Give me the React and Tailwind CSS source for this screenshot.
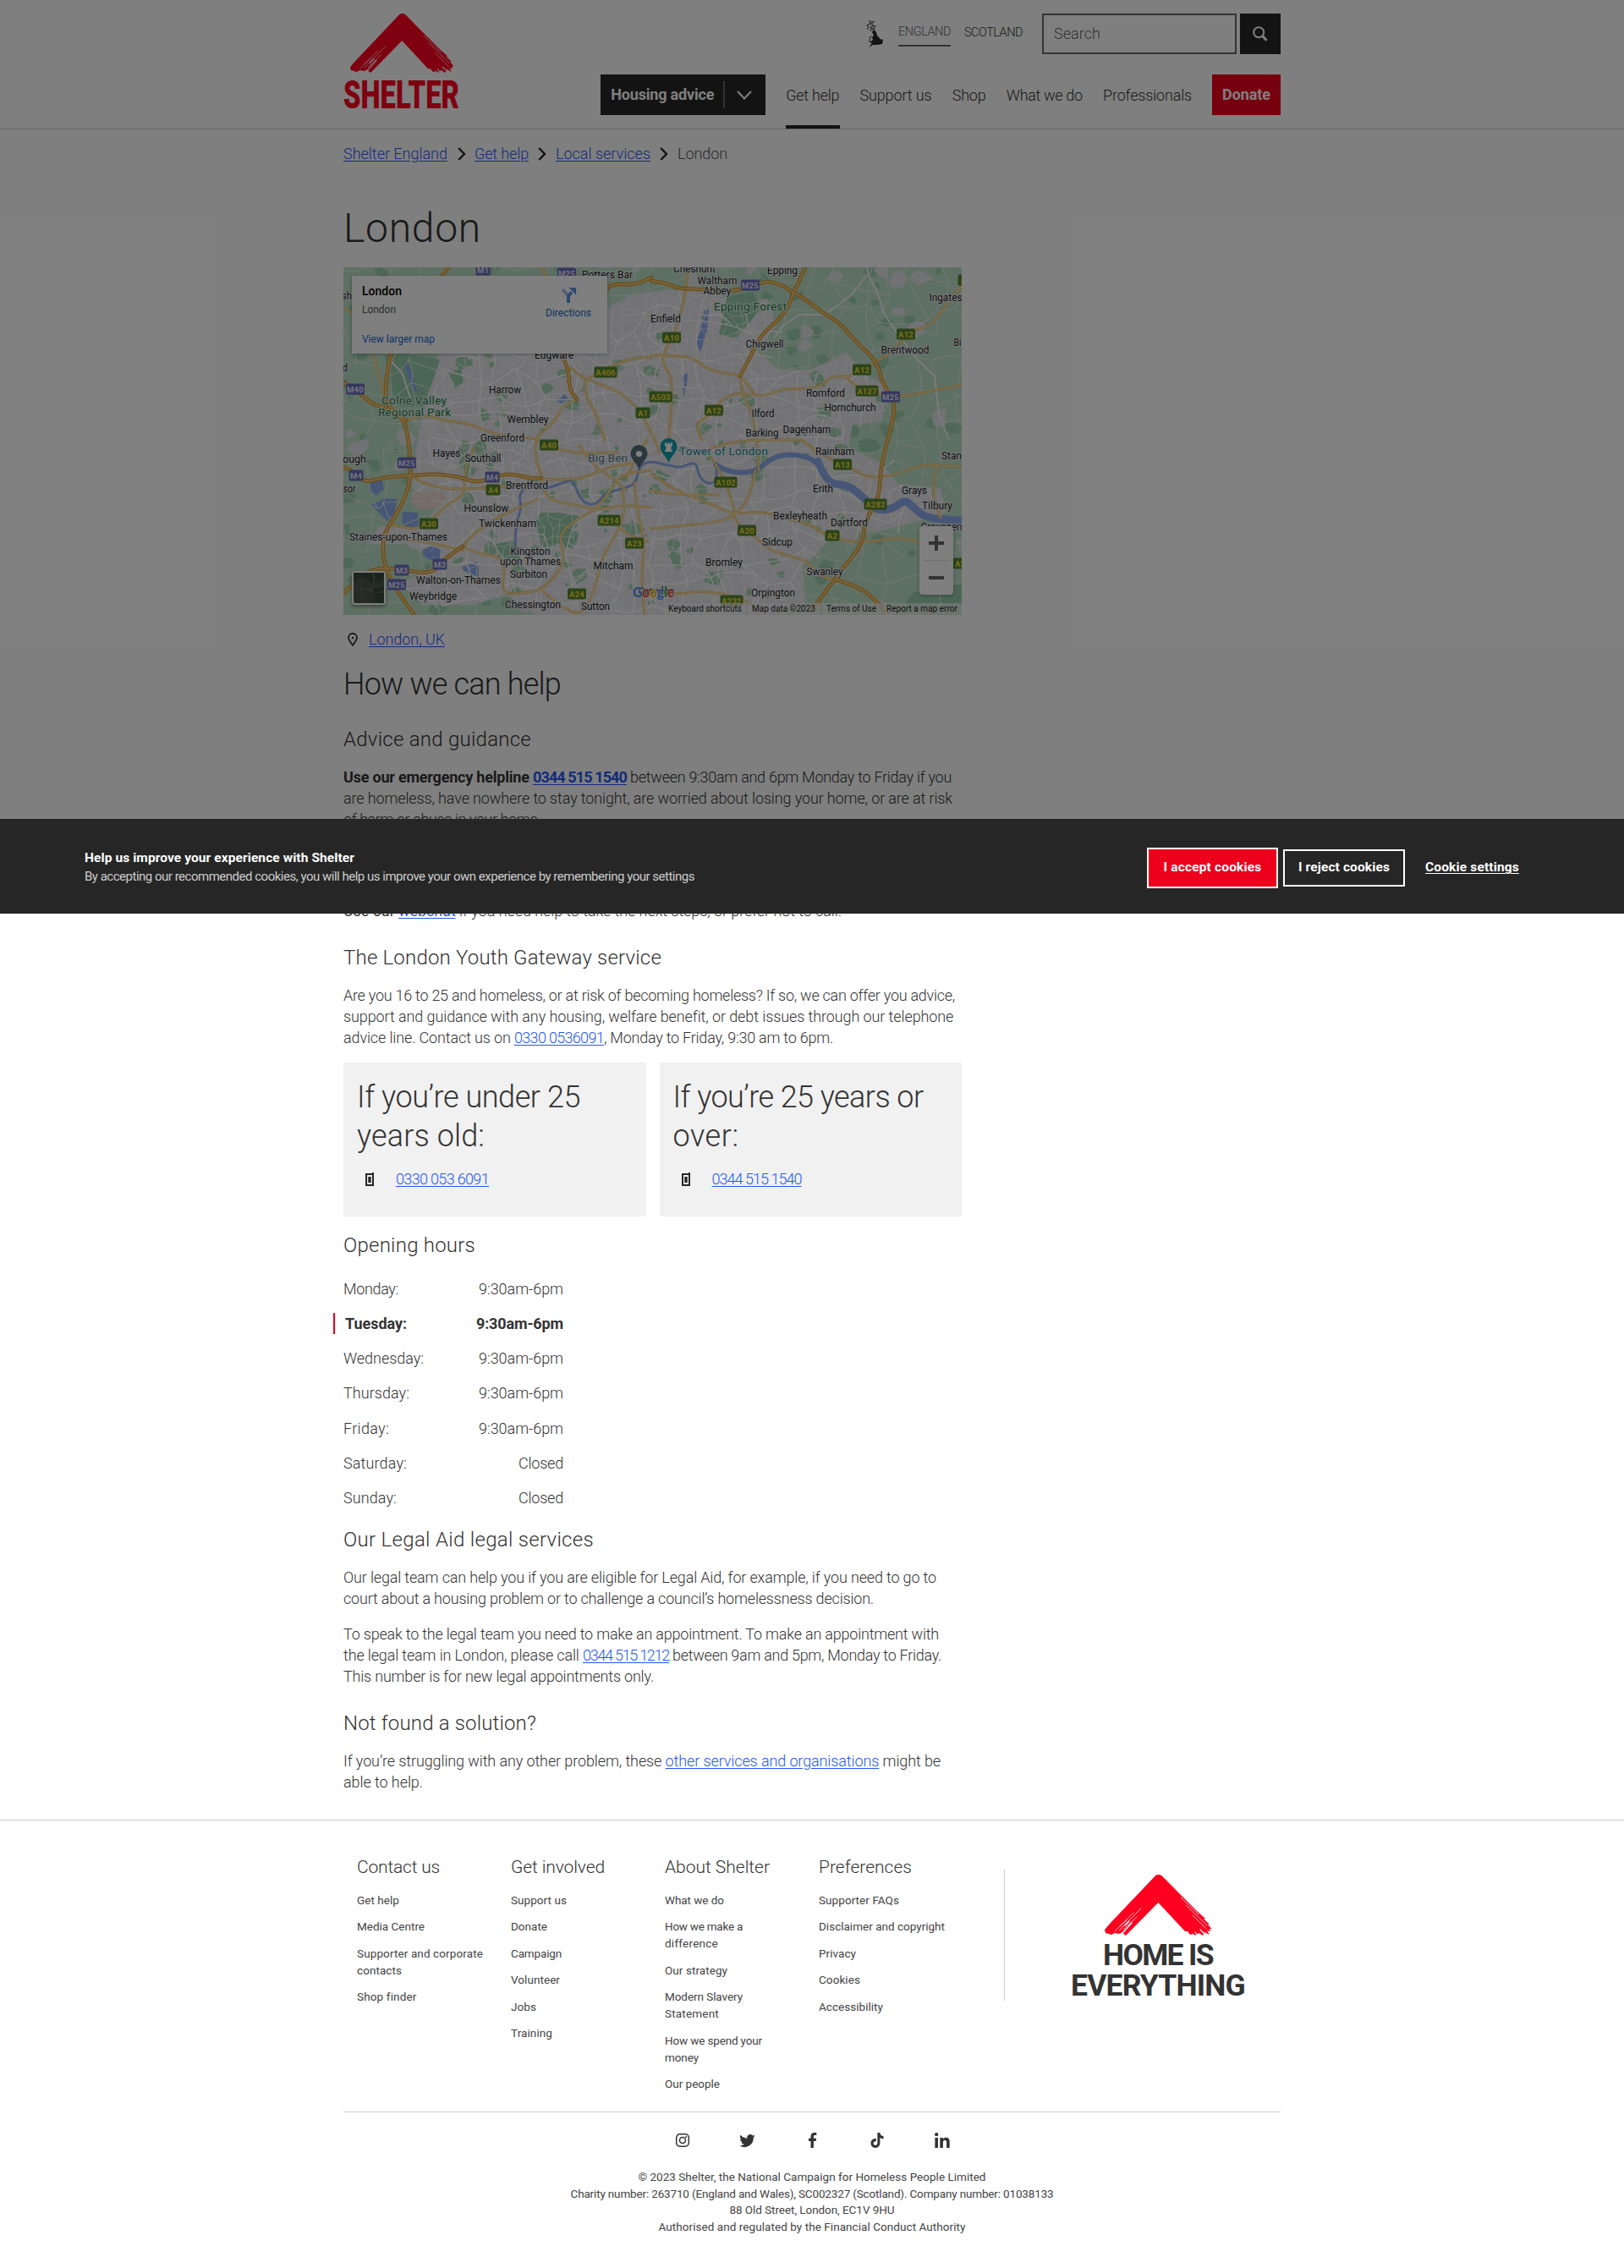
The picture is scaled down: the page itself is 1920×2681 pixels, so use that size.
import React, { useLayoutEffect, useRef } from "react";

/* Sets a single line of text to an exact measure by adjusting its tracking. */
function Fit({ w, className = "", children }) {
  const ref = useRef(null);
  useLayoutEffect(() => {
    const el = ref.current;
    el.style.letterSpacing = "0px";
    const natural = el.getBoundingClientRect().width;
    const n = el.textContent.length || 1;
    el.style.letterSpacing = `${(w - natural) / n}px`;
  }, [w]);
  return (
    <span ref={ref} className={"inline-block whitespace-pre " + className}>
      {children}
    </span>
  );
}

function A({ children, className = "" }) {
  return (
    <a href="#" className={"text-[#2457f5] underline underline-offset-2 " + className}>
      {children}
    </a>
  );
}

function RoofMark({ className }) {
  return (
    <svg viewBox="0 0 127 72" className={className} aria-hidden="true" preserveAspectRatio="none">
      <path
        fill="#ff0020"
        d="M60 1.2Q63.5-1.2 67.5 1.2L88 22 110 44 119 52 117 52 124 59 122 59 126.500 64 124 64 125 67 121 66 124 71 118 68 116 72 111 69 107 72 105 70 101 71 98 67 95 67 63.300 33 25 72 22 70 23 67 17 70 12 69 8 71 1 69 0 65 6 58Z"
      />
      <g stroke="#fff" fill="none" strokeLinecap="round">
        <path strokeWidth=".7" d="M34 45 12 67M43 40 17 66M38 50 22 65M26 54 17 62M90 27 111 47M96 36 121 60M104 48 120 64" />
        <path strokeWidth="1.3" d="M32 57 22 68M29 55 24 60M113 65 117 69M107 68 109 71" />
      </g>
    </svg>
  );
}

const Chevron = ({ className = "" }) => (
  <svg viewBox="0 0 10 16" className={"h-4 w-2.5 " + className} fill="none" stroke="#262626" strokeWidth="2.4">
    <path d="M1.200 1 8 8 1.200 15" />
  </svg>
);

/* ------------------------------- header ------------------------------- */

function Britain() {
  return (
    <svg viewBox="0 0 20 32" className="h-8 w-5">
      <path
        d="M8 2 4 1 5 4 1 6 3 8 1 11M10 1 6 4 8 6 5 9 8 11M8 6 11 7 8 9 10 11 9 12M6 10 5 13"
        fill="none"
        stroke="#555"
        strokeWidth="1.100"
      />
      <path d="M9 11 12 14 13 18 16 21 16 22 20 23 19 28 13 29 8 29 3 32 7 27 4 26 8 23 7 20 9 18 7 14Z" fill="#262626" />
      <path d="M7 19 4 20 5 22 3 25 6 26" fill="none" stroke="#555" />
    </svg>
  );
}

function Header() {
  const nav = [
    ["Get help", 63],
    ["Support us", 85],
    ["Shop", 40],
    ["What we do", 90],
    ["Professionals", 105],
  ];
  return (
    <header className="h-[153px] border-b border-[#ccc]">
      <div className="mx-auto flex w-[1108px] justify-between pt-4">
        <div className="flex w-[138px] flex-col items-center">
          <RoofMark className="h-[70px] w-[123px]" />
          <svg viewBox="0 0 138 35" className="mt-[8px] h-[35px] w-[138px]">
            <text
              x="0"
              y="34"
              fontFamily="Roboto, sans-serif"
              fontWeight="900"
              fontSize="46.500"
              fill="#ff0020"
              textLength="137"
              lengthAdjust="spacingAndGlyphs"
            >
              SHELTER
            </text>
          </svg>
        </div>
        <div className="flex flex-col items-end gap-6">
          <div className="flex h-12 items-center">
            <Britain />
            <span className="ml-[18px] mt-px border-b-2 border-[#666] text-[14.5px] leading-[17px] text-[#666]">
              <span className="block pb-[7px] pt-[3px]"><Fit w={62}>ENGLAND</Fit></span>
            </span>
            <span className="-mt-[2px] ml-[16px] text-[14.5px] leading-5"><Fit w={69}>SCOTLAND</Fit></span>
            <div className="ml-[23px] flex h-12 w-[230px] items-center border-2 border-[#666] pb-px pl-3 text-[18px] text-[#666]">
              <Fit w={55}>Search</Fit>
            </div>
            <button className="ml-1 flex h-12 w-12 items-center justify-center bg-[#262626]">
              <svg viewBox="0 0 18 18" className="h-[18px] w-[18px]" fill="none" stroke="#fff">
                <circle cx="7.200" cy="7.200" r="6" strokeWidth="2" />
                <path d="m11.500 11.500 5 5.200" strokeWidth="3" />
              </svg>
            </button>
          </div>
          <div className="flex h-12 items-center text-[18px]">
            <button className="flex h-12 w-[195px] items-center bg-[#262626] pl-3 font-bold text-white">
              <Fit w={122} className="-mt-px">Housing advice</Fit>
              <span className="ml-[11px] h-8 w-[2px] bg-[#666]" />
              <svg viewBox="0 0 18 11" className="ml-[14px] h-[11px] w-[18px]" fill="none" stroke="#fff" strokeWidth="2">
                <path d="m1 1 8 8.500 8-8.500" />
              </svg>
            </button>
            <nav className="flex gap-[24.200px] pl-6 pt-px">
              {nav.map(([label, w], i) => (
                <a key={label} href="#" className="relative">
                  <Fit w={w}>{label}</Fit>
                  {i === 0 && <span className="absolute -bottom-[26px] left-0 h-1 w-[64px] bg-[#262626]" />}
                </a>
              ))}
            </nav>
            <button className="ml-6 flex h-12 w-[81px] items-center justify-center bg-[#ed001c] pb-px font-bold text-white">
              <Fit w={57}>Donate</Fit>
            </button>
          </div>
        </div>
      </div>
    </header>
  );
}

/* --------------------------------- map -------------------------------- */

function seeded(seed) {
  let s = seed;
  return () => {
    s = (s * 1664525 + 1013904223) % 4294967296;
    return s / 4294967296;
  };
}

const CITY = [
  [520, 422], [580, 400], [640, 408], [700, 378], [745, 352], [790, 345], [850, 348], [862, 372], [905, 356], [915, 385],
  [890, 415], [920, 440], [960, 440], [1000, 420], [1020, 445], [1048, 460], [1040, 495], [1005, 500], [1000, 530],
  [1040, 550], [1060, 575], [1110, 580], [1115, 605], [1040, 625], [990, 625], [965, 650], [945, 670], [950, 712],
  [890, 727], [640, 727], [600, 700], [560, 712], [500, 712], [480, 690], [530, 665], [480, 640], [440, 640], [450, 625],
  [500, 625], [520, 600], [490, 575], [495, 530], [505, 480],
];

function inside(x, y) {
  let hit = false;
  for (let i = 0, j = CITY.length - 1; i < CITY.length; j = i++) {
    const [xi, yi] = CITY[i];
    const [xj, yj] = CITY[j];
    if (yi > y !== yj > y && x < ((xj - xi) * (y - yi)) / (yj - yi) + xi) hit = !hit;
  }
  return hit;
}

function mesh(step, seed, keep) {
  const r = seeded(seed);
  const cols = Math.ceil(760 / step) + 1;
  const rows = Math.ceil(430 / step) + 1;
  const pts = [];
  for (let j = 0; j < rows; j++) {
    pts.push([]);
    for (let i = 0; i < cols; i++) {
      pts[j].push([400 + (i + (r() - 0.5) * 0.95) * step, 310 + (j + (r() - 0.5) * 0.95) * step]);
    }
  }
  let d = "";
  for (let j = 0; j < rows; j++) {
    for (let i = 0; i < cols; i++) {
      const a = pts[j][i];
      [pts[j][i + 1], pts[j + 1] && pts[j + 1][i]].forEach((b) => {
        if (!b || r() < 0.16) return;
        const mx = (a[0] + b[0]) / 2;
        const my = (a[1] + b[1]) / 2;
        if (!keep(mx, my)) return;
        const qx = mx + (r() - 0.5) * step * 0.5;
        const qy = my + (r() - 0.5) * step * 0.5;
        d += `M${a[0].toFixed(1)} ${a[1].toFixed(1)}Q${qx.toFixed(1)} ${qy.toFixed(1)} ${b[0].toFixed(1)} ${b[1].toFixed(1)}`;
      });
    }
  }
  return d;
}

function blobs(count, seed, size, keep) {
  const r = seeded(seed);
  let d = "";
  for (let k = 0; k < count; k++) {
    const x = 406 + r() * 731;
    const y = 316 + r() * 411;
    const s = size * (0.35 + r());
    const pts = [];
    for (let a = 0; a < 7; a++) {
      const t = (a / 7) * Math.PI * 2;
      const q = s * (0.5 + r() * 0.8);
      pts.push(`${(x + Math.cos(t) * q).toFixed(1)} ${(y + Math.sin(t) * q * 0.85).toFixed(1)}`);
    }
    if (keep(x, y)) d += "M" + pts.join("L") + "Z";
  }
  return d;
}

const minorCity = mesh(12, 7, inside);
const midCity = mesh(27, 21, inside);
const rural = mesh(31, 5, (x, y) => !inside(x, y));
const parks = blobs(190, 11, 8, inside);
const woods = blobs(150, 19, 9, (x, y) => !inside(x, y));
const towns = blobs(60, 43, 11, (x, y) => !inside(x, y));

const smooth = (pts) => {
  let d = `M${pts[0]} ${pts[1]}`;
  for (let i = 2; i < pts.length - 2; i += 2) {
    d += `Q${pts[i]} ${pts[i + 1]} ${(pts[i] + pts[i + 2]) / 2} ${(pts[i + 1] + pts[i + 3]) / 2}`;
  }
  return d + `L${pts[pts.length - 2]} ${pts[pts.length - 1]}`;
};

const motorways = [
  [530, 316, 522, 328, 500, 350, 470, 400, 461, 420, 455, 460, 458, 480, 478, 496, 483, 520, 486, 560, 480, 587, 463, 617, 453, 633, 453, 667, 470, 700, 490, 727],
  [717, 342, 722, 335, 750, 337, 770, 328],
  [770, 332, 790, 335, 800, 341, 830, 342, 870, 345, 897, 334, 917, 333, 937, 345, 957, 357, 973, 370, 993, 382, 1010, 402, 1037, 427, 1043, 453, 1057, 473, 1057, 490, 1050, 518, 1041, 553, 1040, 587, 1022, 617, 1020, 643, 1000, 667, 987, 685, 973, 703, 960, 722],
  [987, 685, 1012, 692, 1033, 707, 1050, 727],
  [952, 316, 940, 342, 928, 372, 900, 395, 888, 420, 880, 435, 875, 445],
  [406, 552, 415, 555, 430, 571, 455, 564, 486, 562, 515, 560, 545, 564, 565, 571, 590, 562, 605, 560, 630, 566, 640, 565],
  [406, 702, 425, 682, 445, 671, 475, 673, 510, 679, 525, 661, 547, 646],
  [406, 452, 425, 464, 440, 478, 460, 483, 480, 497],
  [667, 425, 673, 440, 673, 460, 682, 472],
];

const aRoads = [
  [480, 497, 500, 490, 525, 497, 560, 502, 580, 512, 610, 517, 635, 518, 650, 528, 680, 536, 730, 535],
  [441, 420, 448, 445, 455, 470], [406, 363, 420, 370, 440, 400],
  [675, 435, 690, 448, 710, 454, 735, 465, 755, 484], [695, 448, 710, 437, 735, 428, 755, 422, 770, 423],
  [682, 472, 662, 482, 660, 492, 645, 508, 632, 519, 634, 545, 640, 562],
  [692, 450, 690, 463, 705, 490, 715, 520], [755, 484, 770, 510, 780, 535],
  [1137, 338, 1120, 358, 1103, 383, 1075, 393, 1055, 415, 1037, 427, 1003, 447, 985, 443, 967, 460, 925, 459, 905, 469, 870, 464, 853, 472, 835, 495, 822, 500, 830, 520],
  [1002, 447, 1013, 460, 1045, 467, 1077, 468, 1110, 460, 1137, 455],
  [770, 420, 783, 419, 822, 423, 835, 437, 870, 443, 878, 447, 893, 467], [875, 445, 877, 465, 888, 485, 895, 520, 897, 556],
  [813, 324, 810, 350, 803, 375, 797, 395, 784, 418, 784, 432, 795, 445, 793, 490, 790, 530],
  [840, 530, 865, 522, 900, 520, 947, 520], [947, 520, 975, 540, 1010, 555, 1025, 565, 1060, 561, 1085, 550, 1110, 550, 1137, 552],
  [770, 560, 790, 575, 813, 585, 850, 600, 868, 608, 900, 604, 935, 615, 955, 618, 975, 632, 1000, 640, 1035, 640, 1050, 636, 1080, 637, 1100, 650, 1137, 670],
  [770, 625, 800, 622, 850, 617, 870, 608, 885, 590, 893, 556], [868, 610, 875, 625, 890, 632, 910, 650, 935, 658, 955, 663, 970, 682, 987, 685],
  [840, 540, 850, 555, 860, 575, 868, 603], [770, 580, 790, 585, 850, 585],
  [750, 704, 770, 698, 800, 703, 830, 698, 870, 705, 890, 715, 900, 727],
  [634, 545, 640, 562, 645, 590, 680, 597, 707, 603, 735, 597, 770, 600],
  [640, 566, 670, 567, 690, 565, 720, 552, 745, 548], [486, 562, 500, 572, 530, 578, 560, 578, 600, 574],
  [547, 646, 565, 655, 590, 657, 597, 670, 593, 698, 605, 703, 623, 700, 640, 697, 660, 677, 668, 660, 660, 632, 680, 615, 705, 602, 725, 575, 735, 560, 770, 556],
  [547, 646, 560, 630, 590, 610, 620, 597, 635, 590], [463, 620, 490, 628, 510, 615, 530, 595, 550, 585, 548, 560, 560, 530],
  [453, 633, 500, 640, 547, 650], [640, 697, 665, 720, 690, 727, 705, 690, 712, 657, 730, 630, 740, 600, 735, 580],
  [723, 610, 735, 630, 765, 640], [750, 570, 752, 600, 763, 640, 758, 680, 762, 727], [1108, 550, 1100, 580, 1112, 612],
  [640, 316, 650, 335], [685, 527, 700, 550, 725, 565, 740, 580], [765, 520, 750, 545, 740, 565],
];

const river = smooth([
  610, 650, 608, 625, 617, 600, 613, 583, 630, 570, 640, 580, 667, 570, 677, 567, 684, 585, 692, 596, 706, 596, 715, 583, 735, 578,
  752, 572, 756, 550, 770, 545, 790, 550, 805, 553, 823, 545, 826, 563, 837, 573, 848, 568, 846, 549, 858, 558, 893, 559, 913, 540,
  940, 536, 967, 545, 977, 570, 1003, 573, 1023, 590, 1037, 604, 1057, 601, 1070, 589, 1083, 603, 1097, 613, 1137, 615,
]);
const estuary = smooth([846, 549, 858, 558, 893, 559, 913, 540, 940, 536, 967, 545, 977, 570, 1003, 573, 1023, 590, 1037, 604, 1057, 601, 1070, 589, 1083, 603, 1097, 613, 1137, 615]);
const lower = smooth([967, 545, 977, 572, 1003, 573, 1023, 590, 1037, 604, 1057, 601, 1070, 590, 1083, 603, 1097, 613, 1137, 615]);

/* label, centre x, centre y, rendered width */
const places = [
  ["Potters Bar", 718, 325, 60], ["Edgware", 655, 420, 46], ["Harrow", 597, 461, 38], ["Wembley", 624, 496, 49], ["Greenford", 594, 518, 52],
  ["Cheshunt", 821, 318, 50], ["Waltham", 848, 332, 47], ["Abbey", 848, 344, 33], ["Epping", 925, 320, 36], ["Enfield", 787, 377, 36],
  ["Chigwell", 904, 407, 45], ["Brentwood", 1070, 414, 57], ["Ingates", 1118, 352, 39], ["Bi", 1132, 405, 9], ["Romford", 976, 465, 46],
  ["Hornchurch", 1005, 482, 61], ["Ilford", 902, 489, 27], ["Barking", 901, 512, 39], ["Dagenham", 954, 508, 57],
  ["Hayes", 528, 536, 33], ["Southall", 571, 542, 43], ["ough", 419, 543, 28], ["sor", 413, 578, 15], ["sh", 410, 350, 12], ["d", 408, 435, 6],
  ["Brentford", 623, 574, 50], ["Hounslow", 575, 601, 53], ["Twickenham", 600, 619, 68], ["Staines-upon-Thames", 471, 635, 116],
  ["Kingston", 627, 652, 47], ["upon Thames", 627, 664, 72], ["Surbiton", 625, 679, 44], ["Walton-on-Thames", 542, 686, 100],
  ["Weybridge", 512, 705, 56], ["Chessington", 630, 715, 66], ["Sutton", 704, 717, 34], ["Mitcham", 725, 669, 47],
  ["Bromley", 856, 665, 44], ["Sidcup", 919, 641, 36], ["Bexleyheath", 946, 610, 64], ["Dartford", 1004, 618, 44], ["Erith", 973, 578, 24],
  ["Rainham", 987, 534, 46], ["Grays", 1081, 580, 30], ["Tilbury", 1108, 598, 36], ["Gravesen", 1113, 623, 49], ["Stan", 1125, 539, 24],
  ["Swanley", 975, 676, 43], ["Orpington", 914, 701, 52], ["Croydon", 776, 699, 43],
];

const shields = [
  ["M1", 571, 319, 1], ["M25", 670, 323, 1], ["M25", 887, 337, 1], ["M40", 420, 460, 1], ["A406", 716, 440], ["A1", 760, 488],
  ["A10", 794, 399], ["A503", 781, 469], ["A12", 844, 485], ["A12", 1071, 395], ["A12", 1019, 437], ["A127", 1025, 462], ["M25", 1053, 469, 1],
  ["M25", 481, 547, 1], ["M4", 421, 562, 1], ["M4", 582, 564, 1], ["A4", 583, 579], ["A40", 649, 526], ["A30", 507, 619], ["A214", 720, 615],
  ["A23", 750, 642], ["A24", 682, 702], ["M3", 475, 674, 1], ["M3", 520, 667, 1], ["M25", 469, 691, 1], ["A102", 858, 570], ["A13", 996, 549],
  ["A282", 1035, 596], ["A20", 883, 627], ["A2", 984, 633], ["A232", 865, 710], ["A2", 1135, 666], ["A", 1139, 331],
];

const shieldWidth = { 1: 12, 2: 16, 3: 21, 4: 26 };

function MapDrawing() {
  return (
    <svg viewBox="406 316 731 411" className="block h-[411px] w-[731px]" fontFamily="Roboto, sans-serif">
      <rect x="406" y="316" width="731" height="411" fill="#bce0c6" />
      <path d={woods} fill="#9fceaf" />
      <path d={towns} fill="#e2e4e8" />
      <path d={"M" + CITY.map((p) => p.join(" ")).join("L") + "Z"} fill="#e6e7eb" stroke="#e6e7eb" strokeWidth="6" strokeLinejoin="round" />
      <path d={parks} fill="#a4d2b2" />
      <g fill="#98cdab">
        <path d="M633 612 640 606 660 606 684 610 682 622 665 640 648 648 640 645Z" />
        <path d="M664 635 675 625 684 630 680 648 668 648ZM586 642 610 640 615 660 590 660Z" />
        <path d="M455 420 475 418 520 425 512 450 500 480 470 480 460 450Z" />
        <path d="M530 440 545 436 548 452 538 458ZM860 350 890 345 900 365 870 400 850 395ZM1080 700 1137 690V727H1060Z" />
      </g>
      <path d="M487 583 520 580 528 588 518 600 500 603 488 598Z" fill="#ecd6cc" />
      <g fill="#8fadec">
        <path d="M437 570 452 567 454 578 445 586 437 580ZM438 597 455 589 470 590 466 608 458 616 448 606ZM476 605 494 606 495 622 482 625 475 618Z" />
        <path d="M500 650 510 645 522 650 520 660 508 662 500 656ZM833 366 838 366 836 390 828 416 823 405 828 390ZM477 430 484 432 492 460 498 464 488 462ZM658 473 668 466 672 472 662 478Z" />
        <path d="M545 670 565 664 566 682 550 676ZM806 445 813 440 812 455 808 470Z" />
      </g>
      <g fill="none" strokeLinecap="round" strokeLinejoin="round">
        <path d={rural} stroke="#e6edea" strokeWidth="1" />
        <path d={minorCity} stroke="#fafafa" strokeWidth=".7" />
        <path d={midCity} stroke="#fff" strokeWidth="1.400" />
        <path d="M1025 316 1027 325 1037 345 1045 370 1060 393 1085 425 1105 445 1110 490 1122 520M1025 325 1005 350 975 372 945 372 925 385 915 400M460 425 475 440 485 470" stroke="#f4f4f4" strokeWidth="2" />
        <path d={river} stroke="#8fadec" strokeWidth="3" />
        <path d={estuary} stroke="#8fadec" strokeWidth="6" />
        <path d={lower} stroke="#8fadec" strokeWidth="9" />
        {aRoads.map((p, i) => <path key={"c" + i} d={smooth(p)} stroke="#e6bd6a" strokeWidth="3" />)}
        {aRoads.map((p, i) => <path key={"f" + i} d={smooth(p)} stroke="#f8dfa4" strokeWidth="1.500" />)}
        {motorways.map((p, i) => <path key={"m" + i} d={smooth(p)} stroke="#d99a34" strokeWidth="4.600" />)}
        {motorways.map((p, i) => <path key={"n" + i} d={smooth(p)} stroke="#f3ca78" strokeWidth="2" />)}
      </g>
      {shields.map(([t, x, y, m], i) => {
        const w = shieldWidth[t.length];
        return (
          <g key={i}>
            <rect x={x - w / 2 - 0.5} y={y - 6.5} width={w + 1} height="13" rx="2" fill={m ? "#6a6fbe" : "#568631"} />
            <text x={x} y={y + 3.6} textAnchor="middle" fontSize="9.500" fontWeight="700" letterSpacing=".2" fill={m ? "#e8e8f4" : "#f0dc3c"}>{t}</text>
          </g>
        );
      })}
      <g fontSize="12" fill="#202124" stroke="#f1f3f4" strokeWidth="2" strokeLinejoin="round" paintOrder="stroke" textAnchor="middle">
        {places.map(([t, x, y, w]) => (
          <text key={t} x={x} y={y + 4.2} textLength={w} lengthAdjust="spacingAndGlyphs">{t}</text>
        ))}
      </g>
      <g fontSize="13.500" stroke="#e4f3e8" strokeWidth="2" paintOrder="stroke" fill="#237a48">
        <text x="451" y="478" textLength="77">Colne Valley</text>
        <text x="447" y="492" textLength="86">Regional Park</text>
        <text x="844" y="367" textLength="86">Epping Forest</text>
      </g>
      <g fontSize="13.500" stroke="#f1f3f4" strokeWidth="2" paintOrder="stroke">
        <text x="695" y="546" textLength="47" fill="#56788a">Big Ben</text>
        <text x="803" y="538" textLength="105" fill="#17899a">Tower of London</text>
      </g>
      <path d="M755.500 555C753 547 745.500 543 745.500 536A10 10 0 0 1 765.500 536C765.500 543 758 547 755.500 555Z" fill="#546e7a" />
      <circle cx="755.500" cy="536.500" r="3.600" fill="#fff" />
      <path d="M790.500 547C788 539 780.500 535 780.500 528A10 10 0 0 1 800.500 528C800.500 535 793 539 790.500 547Z" fill="#129eaf" />
      <path d="M786 523h2v2h1.500v-2h2v2h1.500v-2h2v4l-1.500 1v3l1.500 2v1h-9v-1l1.500-2v-3l-1.500-1Z" fill="#fff" />
      <g fontFamily="Lato, sans-serif" fontSize="17" fontWeight="700" stroke="#fff" strokeWidth="1" paintOrder="stroke">
        <text x="748" y="706" textLength="49" lengthAdjust="spacingAndGlyphs">
          <tspan fill="#4285f4">G</tspan><tspan fill="#ea4335">o</tspan><tspan fill="#fbbc04">o</tspan><tspan fill="#4285f4">g</tspan><tspan fill="#34a853">l</tspan><tspan fill="#ea4335">e</tspan>
        </text>
      </g>
    </svg>
  );
}

function MapPanel() {
  return (
    <div className="relative mt-[18px] h-[411px] w-[731px] overflow-hidden font-['Roboto',sans-serif] font-normal">
      <MapDrawing />
      <div className="absolute left-[10px] top-[10px] flex h-[92px] w-[302px] justify-between bg-white pl-3 pr-[19px] shadow-[0_1px_4px_rgba(0,0,0,0.3)]">
        <div className="flex flex-col pt-[9px]">
          <p className="text-[14px] font-medium leading-[18px] text-black"><Fit w={47}>London</Fit></p>
          <p className="mt-[4px] text-[12px] leading-[18px] text-[#5b5b5b]"><Fit w={40}>London</Fit></p>
          <a href="#" className="mt-[17px] text-[12px] leading-[18px] text-[#1a66c8]"><Fit w={86}>View larger map</Fit></a>
        </div>
        <a href="#" className="flex flex-col items-center pt-[14px] text-[12px] leading-[18px] text-[#1a66c8]">
          <svg viewBox="0 0 18 18" className="h-[18px] w-[18px]">
            <path d="M2 2 9 9.500V11" stroke="#9dbcea" strokeWidth="3.500" fill="none" />
            <path d="M9 18V11Q9 9 13 5.500" stroke="#5b93e4" strokeWidth="4" fill="none" />
            <path d="M9.500 0H18V8.500Z" fill="#5b93e4" />
          </svg>
          <Fit w={54} className="mt-[3px]">Directions</Fit>
        </a>
      </div>
      <div className="absolute bottom-[12px] left-[10px] h-10 w-10 rounded-sm border-2 border-white bg-[#4a544c] shadow-[0_2px_4px_rgba(0,0,0,0.4)]">
        <svg viewBox="0 0 36 36" className="h-9 w-9" fill="none">
          <path d="M0 9 12 5 20 12 36 8V0H0ZM22 20 36 16V36H25Z" fill="#34483a" />
          <path d="M3 3 10 14 8 26 15 34M23 0 25 12 21 20 27 30M0 22 14 19 25 24 36 22" stroke="#666a60" strokeWidth=".8" />
          <path d="m23 2 2 7M14 19l9 2" stroke="#8a8f88" strokeWidth=".7" />
        </svg>
      </div>
      <div className="absolute right-[10px] top-[306px] flex h-[81px] w-10 flex-col items-center rounded-sm bg-white shadow-[0_1px_4px_rgba(0,0,0,0.3)]">
        <svg viewBox="0 0 40 81" className="h-[81px] w-10" stroke="#666" strokeWidth="4" fill="none">
          <path d="M11 20H29M20 11V29M11 61H29" />
          <path d="M5 40.500H35" stroke="#e0e0e0" strokeWidth="1" />
        </svg>
      </div>
      <div className="absolute bottom-0 right-0 flex h-[14px] items-center bg-[#f5f5f5]/70 text-[10px] leading-[14px] text-[#222]">
        <span className="px-[5px]"><Fit w={87}>Keyboard shortcuts</Fit></span>
        <span className="border-l border-black/10 px-[6px]"><Fit w={75}>Map data ©2023</Fit></span>
        <span className="border-l border-black/10 px-[6px]"><Fit w={59}>Terms of Use</Fit></span>
        <span className="border-l border-black/10 px-[5px]"><Fit w={84}>Report a map error</Fit></span>
      </div>
    </div>
  );
}

/* ------------------------------- content ------------------------------ */

const H3 = ({ w, className, children }) => (
  <h3 className={"text-[24px] leading-[30px] " + className}><Fit w={w}>{children}</Fit></h3>
);

const Line = ({ w, children }) => <span className="block"><Fit w={w}>{children}</Fit></span>;

const FitLink = ({ w, className = "", children }) => (
  <a href="#" className={"text-[#2457f5] " + className}><Fit w={w} className="underline underline-offset-2">{children}</Fit></a>
);

function PhoneCard({ title, phone, pw }) {
  return (
    <div className="h-[182px] bg-[#f1f1f1] px-4 pt-[18px]">
      <h2 className="text-[36px] leading-[46px]">
        {title.map(([t, w]) => <Line key={t} w={w}>{t}</Line>)}
      </h2>
      <div className="mt-[15px] flex h-[25px] items-center pl-[10px]">
        <svg viewBox="0 0 10 16" className="h-4 w-2.5">
          <path d="M8 0h2v16H0V1h8ZM2 3v11h6V3Z" fill="#262626" fillRule="evenodd" />
          <rect x="3.300" y="5" width="3.400" height="7" fill="#262626" />
        </svg>
        <span className="ml-[26px]"><FitLink w={pw}>{phone}</FitLink></span>
      </div>
    </div>
  );
}

function Hours() {
  const rows = [
    ["Monday:", 65, "9:30am-6pm", 100],
    ["Tuesday:", 73, "9:30am-6pm", 103],
    ["Wednesday:", 95, "9:30am-6pm", 100],
    ["Thursday:", 78, "9:30am-6pm", 100],
    ["Friday:", 54, "9:30am-6pm", 100],
    ["Saturday:", 75, "Closed", 53],
    ["Sunday:", 63, "Closed", 53],
  ];
  return (
    <dl className="mt-[16px] flex h-[288px] w-[260px] flex-col">
      {rows.map(([d, dw, t, tw], i) => (
        <div key={d} className="flex flex-1 items-center">
          <div className={i === 1 ? "-ml-3 flex w-[272px] justify-between border-l-2 border-[#ed001c] pl-[12px] font-bold" : "flex w-full justify-between"}>
            <dt><Fit w={dw}>{d}</Fit></dt>
            <dd><Fit w={tw}>{t}</Fit></dd>
          </div>
        </div>
      ))}
    </dl>
  );
}

function Main() {
  return (
    <main className="mx-auto w-[1108px] leading-[25px]">
      <nav className="flex h-[41px] items-center pt-[16px]">
        <FitLink w={123}>Shelter England</FitLink>
        <Chevron className="ml-[12px] mr-[10px]" />
        <FitLink w={64}>Get help</FitLink>
        <Chevron className="ml-[11px] mr-[11px]" />
        <FitLink w={112}>Local services</FitLink>
        <Chevron className="ml-[11px] mr-[11px]" />
        <Fit w={59} className="text-[#555]">London</Fit>
      </nav>
      <div className="w-[735px]">
        <h1 className="mt-[48px] text-[48px] leading-[56px]"><Fit w={163}>London</Fit></h1>
        <MapPanel />
        <p className="mt-4 flex h-[25px] items-center pl-[5px]">
          <svg viewBox="0 0 12 16" className="h-4 w-3" fill="none" stroke="#262626" strokeWidth="1.700">
            <path d="M6 14.800C4.500 12 1 9 1 5.800A5 5 0 0 1 11 5.800C11 9 7.500 12 6 14.800Z" />
            <circle cx="6" cy="6" r="1.200" fill="#262626" stroke="none" />
          </svg>
          <span className="ml-[13px]"><FitLink w={90}>London, UK</FitLink></span>
        </p>
        <h2 className="mt-[18px] text-[36px] leading-[46px]"><Fit w={257}>How we can help</Fit></h2>
        <H3 w={222} className="mt-[27px]">Advice and guidance</H3>
        <p className="mt-[17px]">
          <span className="block">
            <Fit w={224} className="font-bold">{"Use our emergency helpline "}</Fit>
            <FitLink w={111} className="font-bold">0344 515 1540</FitLink>
            <Fit w={384}>{" between 9:30am and 6pm Monday to Friday if you"}</Fit>
          </span>
          <Line w={720}>are homeless, have nowhere to stay tonight, are worried about losing your home, or are at risk</Line>
          <Line w={233}>of harm or abuse in your home.</Line>
        </p>
        <p className="mt-[83px]">
          <Line w={589}><b>Use our <A>webchat</A></b> if you need help to take the next steps, or prefer not to call.</Line>
        </p>
        <H3 w={376} className="mt-[28px]">The London Youth Gateway service</H3>
        <p className="mt-[17px]">
          <Line w={723}>Are you 16 to 25 and homeless, or at risk of becoming homeless? If so, we can offer you advice,</Line>
          <Line w={721}>support and guidance with any housing, welfare benefit, or debt issues through our telephone</Line>
          <span className="block">
            <Fit w={202}>{"advice line. Contact us on "}</Fit>
            <FitLink w={106}>0330 0536091</FitLink>
            <Fit w={271}>, Monday to Friday, 9:30 am to 6pm.</Fit>
          </span>
        </p>
        <div className="mt-[17px] grid w-[731px] grid-cols-2 gap-4">
          <PhoneCard title={[["If you’re under 25", 264], ["years old:", 151]]} phone="0330 053 6091" pw={110} />
          <PhoneCard title={[["If you’re 25 years or", 296], ["over:", 78]]} phone="0344 515 1540" pw={106} />
        </div>
        <H3 w={156} className="mt-[19px]">Opening hours</H3>
        <Hours />
        <H3 w={296} className="mt-[14px]">Our Legal Aid legal services</H3>
        <p className="mt-[17px]">
          <Line w={701}>Our legal team can help you if you are eligible for Legal Aid, for example, if you need to go to</Line>
          <Line w={627}>court about a housing problem or to challenge a council’s homelessness decision.</Line>
        </p>
        <p className="mt-[17px]">
          <Line w={704}>To speak to the legal team you need to make an appointment. To make an appointment with</Line>
          <span className="block">
            <Fit w={283}>{"the legal team in London, please call "}</Fit>
            <FitLink w={102}>0344 515 1212</FitLink>
            <Fit w={322}>{" between 9am and 5pm, Monday to Friday."}</Fit>
          </span>
          <Line w={367}>This number is for new legal appointments only.</Line>
        </p>
        <H3 w={228} className="mt-[28px]">Not found a solution?</H3>
        <p className="mt-[17px]">
          <Line w={706}>If you’re struggling with any other problem, these <A>other services and organisations</A> might be</Line>
          <Line w={94}>able to help.</Line>
        </p>
      </div>
    </main>
  );
}

/* -------------------------------- footer ------------------------------ */

const columns = [
  ["Contact us", 98, [[["Get help", 50]], [["Media Centre", 80]], [["Supporter and corporate", 149], ["contacts", 53]], [["Shop finder", 70]]]],
  ["Get involved", 111, [[["Support us", 66]], [["Donate", 43]], [["Campaign", 60]], [["Volunteer", 58]], [["Jobs", 30]], [["Training", 49]]]],
  ["About Shelter", 124, [[["What we do", 70]], [["How we make a", 92], ["difference", 63]], [["Our strategy", 74]], [["Modern Slavery", 92], ["Statement", 64]], [["How we spend your", 115], ["money", 40]], [["Our people", 65]]]],
  ["Preferences", 110, [[["Supporter FAQs", 95]], [["Disclaimer and copyright", 149]], [["Privacy", 44]], [["Cookies", 49]], [["Accessibility", 76]]]],
];

function Social() {
  return (
    <div className="flex h-[18px] items-center justify-center gap-[58.5px]">
      <svg viewBox="0 0 18 18" className="h-[18px] w-[18px]" fill="none" stroke="#333" strokeWidth="1.500">
        <rect x="1.700" y="1.700" width="14.600" height="14.600" rx="4.200" />
        <circle cx="9" cy="9" r="3.500" />
        <circle cx="13.100" cy="4.900" r="1" fill="#333" stroke="none" />
      </svg>
      <svg viewBox="0 0 24 24" className="h-[19px] w-[19px]" fill="#333">
        <path d="M23.600 5c-.85.400-1.750.650-2.700.750a4.700 4.700 0 0 0 2-2.600c-.9.550-1.900.950-3 1.150a4.700 4.700 0 0 0-8.100 4.300A13.400 13.400 0 0 1 2 3.600a4.700 4.700 0 0 0 1.500 6.300c-.8 0-1.500-.2-2.100-.6v.1a4.700 4.700 0 0 0 3.800 4.600c-.7.200-1.400.2-2.100.1a4.700 4.700 0 0 0 4.400 3.300A9.500 9.500 0 0 1 .5 19.300 13.400 13.400 0 0 0 21.200 7.400c.95-.65 1.750-1.500 2.400-2.400Z" />
      </svg>
      <svg viewBox="0 0 18 18" className="h-[18px] w-[18px]" fill="#333">
        <path d="M6.500 18V10H4V6.700H6.500V4.500C6.500 1.600 8.200 0 10.800 0c1.200 0 2.300.1 2.500.1v3h-1.700c-1.400 0-1.700.7-1.700 1.600v2h3.200L12.700 10H9.900v8Z" />
      </svg>
      <svg viewBox="0 0 24 24" className="h-[18px] w-[18px]" fill="#333">
        <path d="M12.500 0h4c.1 3 2.200 5.400 5.500 5.700v4.100c-2 0-4-.6-5.500-1.700v8.200c0 4.500-3.400 7.700-7.400 7.700C5 24 2 20.600 2 16.700c0-4.500 3.900-7.900 8.400-7.200v4.200c-2.300-.7-4.300.8-4.300 2.900 0 1.700 1.300 3.200 3.100 3.200 2 0 3.300-1.400 3.300-3.600Z" />
      </svg>
      <svg viewBox="0 0 18 18" className="h-[18px] w-[18px]" fill="#333">
        <path d="M.4 6H4v12H.4ZM6.300 6h3.500v1.600C10.500 6.500 11.700 5.700 13.300 5.700c3.500 0 4.400 2.200 4.400 5.400V18h-3.600v-6.200c0-1.500-.2-2.900-2-2.900-1.900 0-2.200 1.500-2.200 2.900V18H6.300Z" />
        <circle cx="2.200" cy="2.200" r="2.100" />
      </svg>
    </div>
  );
}

function Footer() {
  return (
    <footer className="mt-[32px] border-t border-[#ccc]">
      <div className="mx-auto w-[1108px]">
        <div className="flex h-[345px] border-b border-[#ccc] pl-4 pt-[41px]">
          {columns.map(([title, w, items]) => (
            <section key={title} className="w-[182px]">
              <h4 className="text-[21px] leading-7"><Fit w={w}>{title}</Fit></h4>
              <ul className="mt-[14.5px] flex flex-col gap-[11.5px] text-[13.5px] font-normal leading-5 text-[#444]">
                {items.map((lines) => (
                  <li key={lines[0][0]}>
                    {lines.map(([t, lw]) => <Line key={t} w={lw}>{t}</Line>)}
                  </li>
                ))}
              </ul>
            </section>
          ))}
          <div className="ml-[37px] mt-[17px] flex h-[155px] flex-1 flex-col items-center border-l border-[#ccc] pl-[36px] pt-[6px]">
            <RoofMark className="h-[72px] w-[127px]" />
            <p className="mt-[5px] text-center text-[35.5px] font-bold leading-9">
              <Line w={130}>HOME IS</Line>
              <Line w={206}>EVERYTHING</Line>
            </p>
          </div>
        </div>
        <div className="pt-[24px]"><Social /></div>
        <div className="mt-[25px] h-[117px] text-center text-[13.5px] font-normal leading-[19.6px] text-[#444]">
          <Line w={411}>© 2023 Shelter, the National Campaign for Homeless People Limited</Line>
          <Line w={571}>Charity number: 263710 (England and Wales), SC002327 (Scotland). Company number: 01038133</Line>
          <Line w={195}>88 Old Street, London, EC1V 9HU</Line>
          <Line w={363}>Authorised and regulated by the Financial Conduct Authority</Line>
        </div>
      </div>
    </footer>
  );
}

function CookieBanner() {
  return (
    <div className="absolute inset-x-0 top-[968px] flex h-[112px] items-center justify-between bg-[#262626] pl-[100px] pr-[124px] text-[15.500px] text-white">
      <div className="pt-px leading-[22px]">
        <p className="font-bold"><Fit w={319}>Help us improve your experience with Shelter</Fit></p>
        <p className="text-[15px] font-normal text-[#ccc]"><Fit w={721}>By accepting our recommended cookies, you will help us improve your own experience by remembering your settings</Fit></p>
      </div>
      <div className="mt-[4px] flex items-center font-bold">
        <button className="flex h-12 w-[155px] items-center justify-center border-2 border-white bg-[#ed001c]"><Fit w={116}>I accept cookies</Fit></button>
        <button className="ml-[6px] flex h-11 w-[144px] items-center justify-center border-2 border-white"><Fit w={108}>I reject cookies</Fit></button>
        <Fit w={111} className="ml-[24px] underline underline-offset-2">Cookie settings</Fit>
      </div>
    </div>
  );
}

export default function App() {
  return (
    <div className="relative h-[2681px] w-[1920px] overflow-hidden bg-white font-['Roboto',sans-serif] text-[18px] font-light text-[#333]">
      <Header />
      <Main />
      <Footer />
      <div className="absolute inset-x-0 top-0 h-[1080px] bg-black/50" />
      <CookieBanner />
    </div>
  );
}
